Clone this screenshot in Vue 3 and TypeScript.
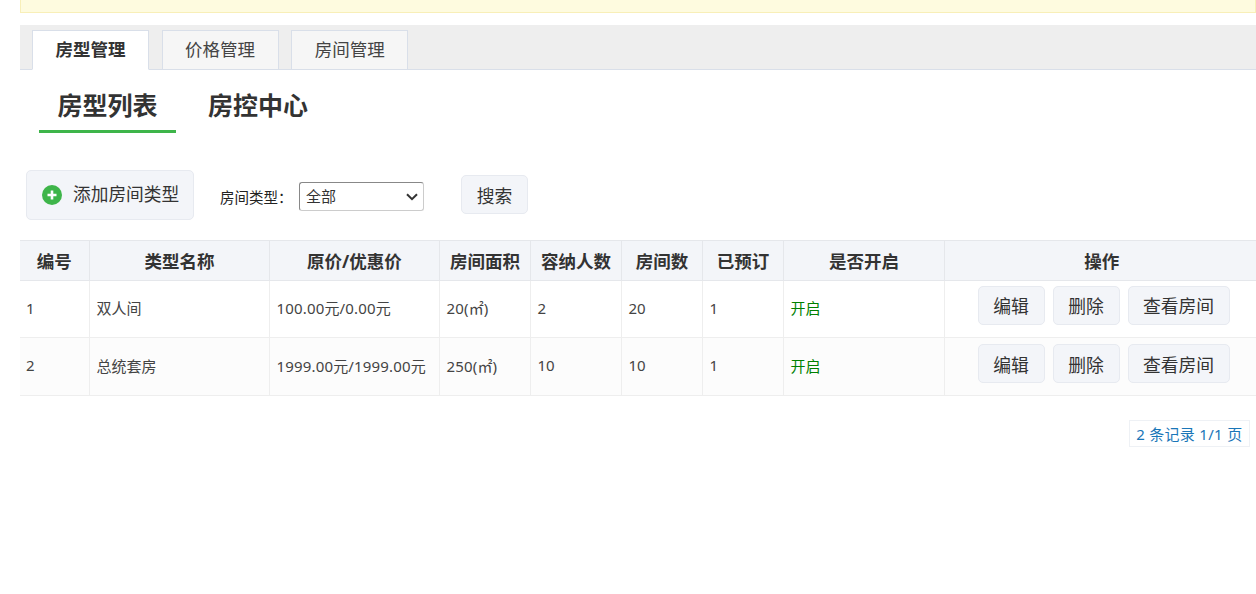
<script setup lang="ts">
interface Row { id: number; name: string; price: string; area: string; cap: number; rooms: number; booked: number }
const rows: Row[] = [
  { id: 1, name: '双人间', price: '100.00元/0.00元', area: '20(㎡)', cap: 2, rooms: 20, booked: 1 },
  { id: 2, name: '总统套房', price: '1999.00元/1999.00元', area: '250(㎡)', cap: 10, rooms: 10, booked: 1 },
]
const heads = ['编号', '类型名称', '原价/优惠价', '房间面积', '容纳人数', '房间数', '已预订', '是否开启', '操作']
</script>

<template>
  <div class="page">
    <div class="notice"></div>
    <div class="tabs">
      <div class="tab active">房型管理</div>
      <div class="tab">价格管理</div>
      <div class="tab">房间管理</div>
    </div>
    <div class="subtabs">
      <div class="sub active">房型列表</div>
      <div class="sub">房控中心</div>
    </div>
    <div class="toolbar">
      <button class="btn add">
        <svg width="20" height="20" viewBox="0 0 20 20">
          <circle cx="10" cy="10" r="10" fill="#3eb54a" />
          <path d="M10 5.5v9M5.5 10h9" stroke="#fff" stroke-width="2.6" />
        </svg>
        <span>添加房间类型</span>
      </button>
      <label class="lab">房间类型：</label>
      <div class="selwrap">
        <select class="sel"><option>全部</option></select>
        <svg class="chev" width="12" height="8" viewBox="0 0 12 8">
          <path d="M1 1.2l5 5 5-5" fill="none" stroke="#333" stroke-width="2" />
        </svg>
      </div>
      <button class="btn search">搜索</button>
    </div>
    <table class="tbl">
      <colgroup>
        <col style="width:69px" /><col style="width:180px" /><col style="width:170px" /><col style="width:91px" />
        <col style="width:91px" /><col style="width:81px" /><col style="width:81px" /><col style="width:161px" /><col />
      </colgroup>
      <thead>
        <tr><th v-for="h in heads" :key="h">{{ h }}</th></tr>
      </thead>
      <tbody>
        <tr v-for="r in rows" :key="r.id">
          <td class="first">{{ r.id }}</td>
          <td>{{ r.name }}</td>
          <td class="num">{{ r.price }}</td>
          <td class="num">{{ r.area }}</td>
          <td>{{ r.cap }}</td>
          <td>{{ r.rooms }}</td>
          <td>{{ r.booked }}</td>
          <td class="on">开启</td>
          <td class="ops">
            <button class="btn op">编辑</button>
            <button class="btn op">删除</button>
            <button class="btn op wide">查看房间</button>
          </td>
        </tr>
      </tbody>
    </table>
    <div class="pager"><span>2 条记录 1/1 页</span></div>
  </div>
</template>

<style>
html, body { margin: 0; background: #fff; overflow: hidden; }
</style>

<style scoped>
.page {
  height: 594px;
  padding-left: 20px;
  box-sizing: border-box;
  font-family: "Noto Sans", "Noto Sans CJK SC", sans-serif;
  color: #333;
  font-size: 14px;
}
.notice {
  height: 13px;
  box-sizing: border-box;
  background: #fefbdf;
  border: 1px solid #f8efb8;
  border-top: 0;
}
.tabs {
  margin-top: 12px;
  height: 45px;
  box-sizing: border-box;
  background: #eee;
  border-bottom: 1px solid #d9dfe9;
  display: flex;
  align-items: flex-end;
  padding-left: 12px;
  gap: 12.6px;
}
.tab {
  width: 117px;
  height: 40px;
  margin-bottom: -1px;
  box-sizing: border-box;
  border: 1px solid #d9dfe9;
  background: #f6f6f6;
  text-align: center;
  line-height: 36px;
  font-size: 17.5px;
  color: #444;
}
.tab.active {
  background: #fff;
  border-bottom-color: #fff;
  font-weight: 700;
  color: #333;
}
.subtabs {
  display: flex;
  padding-left: 19px;
  height: 64px;
  gap: 18px;
}
.sub {
  width: 137px;
  height: 63px;
  box-sizing: border-box;
  text-align: center;
  font-size: 25px;
  font-weight: 700;
  line-height: 70px;
  color: #333;
}
.sub.active { border-bottom: 3px solid #3eb54a; }
.sub + .sub { width: 128px; }
.btn {
  font-family: inherit;
  background: #f3f5f9;
  border: 1px solid #e7eaf0;
  border-radius: 5px;
  color: #333;
  font-size: 17.8px;
  padding: 0;
  cursor: pointer;
}
.toolbar {
  display: flex;
  align-items: center;
  margin-top: 36px;
  padding-left: 6px;
  height: 50px;
}
.add {
  width: 168px;
  height: 50px;
  display: flex;
  align-items: center;
  padding-left: 15px;
  gap: 11px;
  box-sizing: border-box;
  font-size: 17.7px;
}
.add span { position: relative; top: -2px; }
.lab {
  margin-left: 26px;
  width: 79px;
  font-size: 14.5px;
  color: #222;
  position: relative;
  top: 1px;
  white-space: nowrap;
}
.selwrap {
  position: relative;
  width: 125px;
  height: 29px;
  margin-top: 2px;
}
.sel {
  appearance: none;
  display: block;
  width: 100%;
  height: 100%;
  box-sizing: border-box;
  font-family: inherit;
  font-size: 15px;
  color: #333;
  background: #fff;
  border: 1px solid #ccc;
  border-top-color: #888;
  border-left-color: #888;
  border-radius: 3px;
  padding-left: 6px;
}
.chev {
  position: absolute;
  right: 6px;
  top: 11px;
  pointer-events: none;
}
.search {
  width: 67px;
  height: 39px;
  margin-left: 37px;
  margin-top: -1px;
}
.tbl {
  width: 1236px;
  margin-top: 20px;
  border-collapse: collapse;
  table-layout: fixed;
}
th {
  height: 40px;
  padding: 0 0 1px 1px;
  box-sizing: border-box;
  background: #f3f5f9;
  border: 1px solid #e5e7eb;
  border-left: 0;
  font-size: 17.5px;
  font-weight: 700;
  color: #333;
}
th:first-child { padding-left: 0; }
th:last-child { border-right: 0; padding-left: 3px; }
td {
  height: 57px;
  padding: 0 7px 3px;
  box-sizing: border-box;
  border: 1px solid #eee;
  border-left: 0;
  border-top: 0;
  color: #444;
  font-size: 15px;
  white-space: nowrap;
  overflow: hidden;
}
td:last-child { border-right: 0; }
td.first { padding-left: 6px; }
td.num { letter-spacing: 0.17px; }
tbody tr:nth-child(2) td { background: #fcfcfc; height: 58px; }
td.on { color: #008000; }
td.ops { padding: 0 0 8px 33px; overflow: visible; }
tbody tr:nth-child(2) td.ops { padding-bottom: 6px; }
.op {
  width: 67px;
  height: 39px;
  margin-right: 8px;
  box-sizing: border-box;
}
.op.wide { width: 102px; }
.pager {
  display: flex;
  justify-content: flex-end;
  margin-top: 24px;
  padding-right: 6px;
}
.pager span {
  height: 27px;
  line-height: 27px;
  padding: 0 6.5px;
  box-sizing: border-box;
  border: 1px solid #eef1f5;
  color: #1a76b8;
  font-size: 15px;
  letter-spacing: 0.3px;
  white-space: nowrap;
}
</style>
